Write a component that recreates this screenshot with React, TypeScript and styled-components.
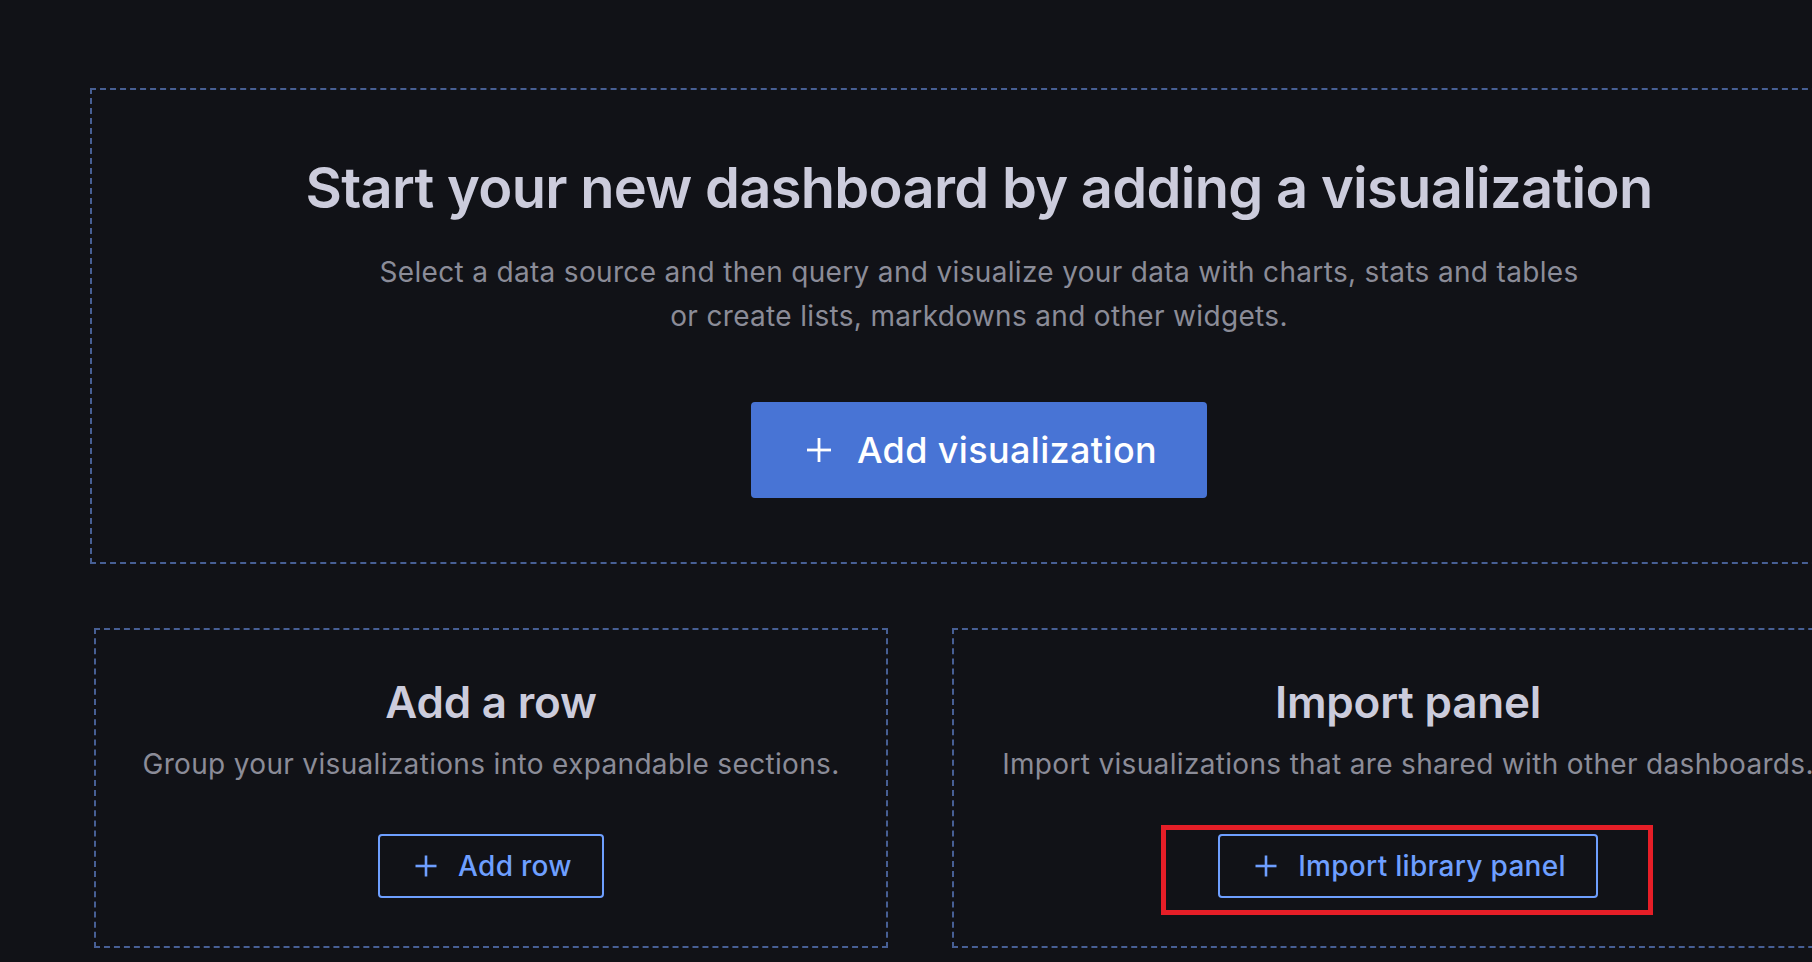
import React from "react";
import styled, { createGlobalStyle } from "styled-components";

const GlobalStyle = createGlobalStyle`
  html, body {
    margin: 0;
    padding: 0;
    background: #111217;
    overflow: hidden;
  }
  body {
    font-family: Inter, "Noto Sans", "Liberation Sans", sans-serif;
    color: #ccccdc;
  }
  * { box-sizing: border-box; }
`;

const Page = styled.div`
  width: 1868px;
  min-height: 962px;
  padding: 88px 0 0 90px;
  background: #111217;
`;

const Layout = styled.div`
  width: 1778px;
  display: flex;
  flex-direction: column;
  gap: 64px;
`;

const DashedBox = styled.section<{ $pad: number }>`
  border: 2px dashed #475f94;
  padding: ${(p) => p.$pad}px;
  display: flex;
  flex-direction: column;
  align-items: center;
  text-align: center;
`;

const BottomRow = styled.div`
  display: grid;
  grid-template-columns: 794px 1fr;
  gap: 64px;
  margin: 0 4px;
`;

const MainTitle = styled.h1`
  margin: 0 0 28px;
  font-size: 56px;
  line-height: 68px;
  font-weight: 600;
  letter-spacing: -0.7px;
  color: #ccccdc;
  white-space: nowrap;
`;

const CardTitle = styled.h2`
  margin: 0 0 16px;
  font-size: 44px;
  line-height: 48px;
  font-weight: 600;
  letter-spacing: -0.2px;
  color: #ccccdc;
  white-space: nowrap;
`;

const Description = styled.p<{ $gap: number }>`
  margin: 0 0 ${(p) => p.$gap}px;
  font-size: 28px;
  line-height: 44px;
  font-weight: 400;
  letter-spacing: 0.33px;
  color: #8b8c98;
  white-space: nowrap;
`;

const Button = styled.button<{ $variant: "primary" | "secondary"; $size: "lg" | "md" }>`
  display: inline-flex;
  align-items: center;
  height: ${(p) => (p.$size === "lg" ? 96 : 64)}px;
  padding: 0 ${(p) => (p.$size === "lg" ? 48 : 30)}px;
  border-radius: 4px;
  font-family: inherit;
  font-size: ${(p) => (p.$size === "lg" ? 36 : 28)}px;
  font-weight: 500;
  letter-spacing: ${(p) => (p.$size === "lg" ? 0.35 : 0.3)}px;
  cursor: pointer;
  background: ${(p) => (p.$variant === "primary" ? "#4874d5" : "transparent")};
  color: ${(p) => (p.$variant === "primary" ? "#ffffff" : "#6e9fff")};
  border: 2px solid ${(p) => (p.$variant === "primary" ? "#4874d5" : "#6e9fff")};
  svg {
    flex: none;
    margin-right: ${(p) => (p.$size === "lg" ? 20 : 16)}px;
  }
`;

const HighlightWrap = styled.div`
  position: relative;
  display: inline-flex;
`;

const Highlight = styled.span`
  position: absolute;
  top: -9px;
  left: -57px;
  right: -55px;
  bottom: -17px;
  border: 5px solid #e61e27;
  pointer-events: none;
`;

const PlusIcon = ({ size, glyph, stroke }: { size: number; glyph: number; stroke: number }) => {
  const a = (size - glyph) / 2;
  const b = size - a;
  const c = size / 2;
  return (
    <svg width={size} height={size} viewBox={`0 0 ${size} ${size}`} fill="none" stroke="currentColor" strokeWidth={stroke}>
      <line x1={c} y1={a} x2={c} y2={b} />
      <line x1={a} y1={c} x2={b} y2={c} />
    </svg>
  );
};

export default function App() {
  return (
    <>
      <GlobalStyle />
      <Page>
        <Layout>
          <DashedBox $pad={64}>
            <MainTitle>Start your new dashboard by adding a visualization</MainTitle>
            <Description $gap={64}>
              Select a data source and then query and visualize your data with charts, stats and tables
              <br />
              or create lists, markdowns and other widgets.
            </Description>
            <Button $variant="primary" $size="lg">
              <PlusIcon size={36} glyph={24} stroke={2.8} />
              Add visualization
            </Button>
          </DashedBox>
          <BottomRow>
            <DashedBox $pad={48}>
              <CardTitle>Add a row</CardTitle>
              <Description $gap={48}>Group your visualizations into expandable sections.</Description>
              <Button $variant="secondary" $size="md">
                <PlusIcon size={32} glyph={21} stroke={2.6} />
                Add row
              </Button>
            </DashedBox>
            <DashedBox $pad={48}>
              <CardTitle>Import panel</CardTitle>
              <Description $gap={48}>Import visualizations that are shared with other dashboards.</Description>
              <HighlightWrap>
                <Button $variant="secondary" $size="md">
                  <PlusIcon size={32} glyph={21} stroke={2.6} />
                  Import library panel
                </Button>
                <Highlight />
              </HighlightWrap>
            </DashedBox>
          </BottomRow>
        </Layout>
      </Page>
    </>
  );
}
